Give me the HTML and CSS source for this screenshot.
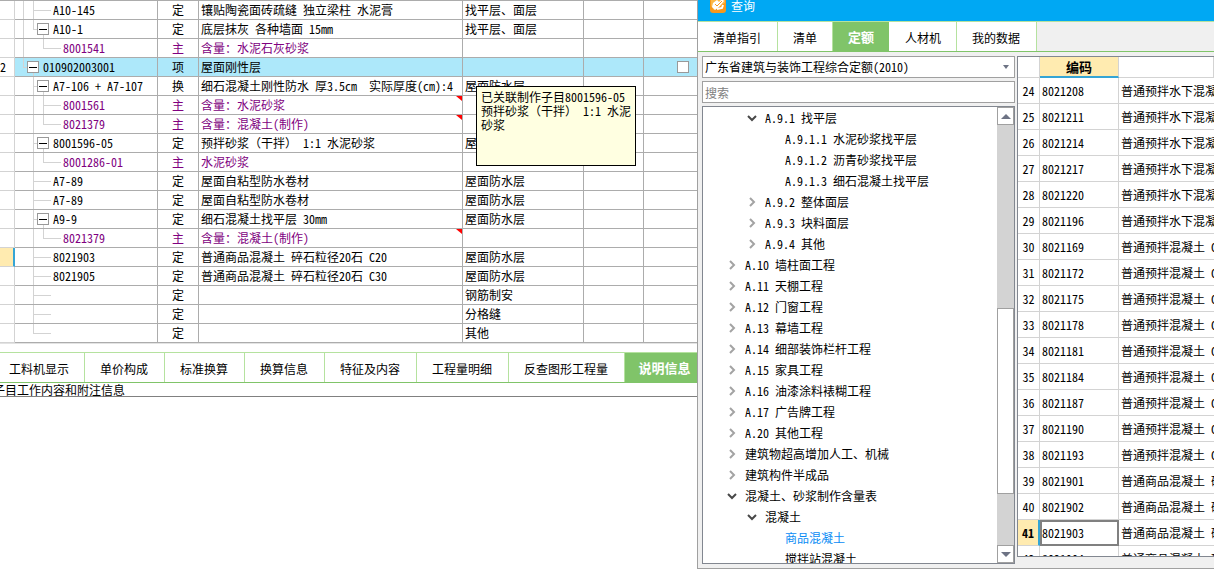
FILE: index.html
```html
<!DOCTYPE html>
<html lang="zh-CN">
<head>
<meta charset="utf-8">
<title>查询</title>
<link rel="stylesheet" href="styles.css">
</head>
<body>
<svg class="defs" aria-hidden="true">
  <symbol id="right" viewBox="0 0 10 10"><path d="M3 1l4 4-4 4" fill="none" stroke="#a3a3a3" stroke-width="2"/></symbol>
  <symbol id="down" viewBox="0 0 10 10"><path d="M1 3l4 4 4-4" fill="none" stroke="#484848" stroke-width="2"/></symbol>
</svg>
<div class="app">
<main class="bill">
  <table class="sheet">
    <colgroup><col class="c-num"><col class="c-code"><col class="c-type"><col class="c-name"><col class="c-part"><col class="c-a"><col></colgroup>
    <tbody>
    <tr><th></th><td><div class="node"><i class="v"></i><i class="t"></i><i class="h"></i>A10-145</div></td><td>定</td><td>镶贴陶瓷面砖疏缝 独立梁柱 水泥膏</td><td>找平层、面层</td><td></td><td></td></tr>
    <tr><th></th><td><div class="node"><i class="v"></i><i class="l s"></i><button class="box" aria-label="折叠"></button>A10-1</div></td><td>定</td><td>底层抹灰 各种墙面 15mm</td><td>找平层、面层</td><td></td><td></td></tr>
    <tr class="main"><th></th><td><div class="node"><i class="v"></i><i></i><i class="l"></i><i class="h"></i>8001541</div></td><td>主</td><td>含量：水泥石灰砂浆</td><td></td><td></td><td></td></tr>
    <tr class="item"><th>2</th><td><div class="node"><i class="l s"></i><button class="box" aria-label="折叠"></button>010902003001</div></td><td>项</td><td>屋面刚性层</td><td></td><td></td><td class="check"><input type="checkbox" aria-label="选择"></td></tr>
    <tr><th></th><td><div class="node"><i></i><i class="t s"></i><button class="box" aria-label="折叠"></button>A7-106 + A7-107</div></td><td>换</td><td>细石混凝土刚性防水 厚3.5cm  实际厚度(cm):4</td><td>屋面防水层</td><td></td><td></td></tr>
    <tr class="main"><th></th><td><div class="node"><i></i><i class="v"></i><i class="t"></i><i class="h"></i>8001561</div></td><td>主</td><td class="note">含量：水泥砂浆</td><td></td><td></td><td></td></tr>
    <tr class="main"><th></th><td><div class="node"><i></i><i class="v"></i><i class="l"></i><i class="h"></i>8021379</div></td><td>主</td><td class="note">含量：混凝土(制作)</td><td></td><td></td><td></td></tr>
    <tr><th></th><td><div class="node"><i></i><i class="t s"></i><button class="box" aria-label="折叠"></button>8001596-05</div></td><td>定</td><td>预拌砂浆（干拌） 1:1 水泥砂浆</td><td>屋面防水层</td><td></td><td></td></tr>
    <tr class="main"><th></th><td><div class="node"><i></i><i class="v"></i><i class="l"></i><i class="h"></i>8001286-01</div></td><td>主</td><td>水泥砂浆</td><td></td><td></td><td></td></tr>
    <tr><th></th><td><div class="node"><i></i><i class="t"></i><i class="h"></i>A7-89</div></td><td>定</td><td>屋面自粘型防水卷材</td><td>屋面防水层</td><td></td><td></td></tr>
    <tr><th></th><td><div class="node"><i></i><i class="t"></i><i class="h"></i>A7-89</div></td><td>定</td><td>屋面自粘型防水卷材</td><td>屋面防水层</td><td></td><td></td></tr>
    <tr><th></th><td><div class="node"><i></i><i class="t s"></i><button class="box" aria-label="折叠"></button>A9-9</div></td><td>定</td><td>细石混凝土找平层 30mm</td><td>屋面防水层</td><td></td><td></td></tr>
    <tr class="main"><th></th><td><div class="node"><i></i><i class="v"></i><i class="l"></i><i class="h"></i>8021379</div></td><td>主</td><td class="note">含量：混凝土(制作)</td><td></td><td></td><td></td></tr>
    <tr class="current"><th></th><td><div class="node"><i></i><i class="t"></i><i class="h"></i>8021903</div></td><td>定</td><td>普通商品混凝土 碎石粒径20石 C20</td><td>屋面防水层</td><td></td><td></td></tr>
    <tr><th></th><td><div class="node"><i></i><i class="t"></i><i class="h"></i>8021905</div></td><td>定</td><td>普通商品混凝土 碎石粒径20石 C30</td><td>屋面防水层</td><td></td><td></td></tr>
    <tr><th></th><td><div class="node"><i></i><i class="t"></i><i class="h"></i></div></td><td>定</td><td></td><td>钢筋制安</td><td></td><td></td></tr>
    <tr><th></th><td><div class="node"><i></i><i class="t"></i><i class="h"></i></div></td><td>定</td><td></td><td>分格缝</td><td></td><td></td></tr>
    <tr><th></th><td><div class="node"><i></i><i class="l"></i><i class="h"></i></div></td><td>定</td><td></td><td>其他</td><td></td><td></td></tr>
    </tbody>
  </table>
  <nav class="tabs detail-tabs">
    <button>工料机显示</button><button>单价构成</button><button>标准换算</button><button>换算信息</button><button>特征及内容</button><button>工程量明细</button><button>反查图形工程量</button><button class="on">说明信息</button>
  </nav>
  <p class="info">子目工作内容和附注信息</p>
  <div class="tip" role="tooltip">已关联制作子目8001596-05 预拌砂浆（干拌） 1:1 水泥砂浆</div>
</main>

<section class="query">
  <header class="title">
    <svg class="logo" viewBox="0 0 16 16"><rect width="16" height="16" rx="3" fill="#f7981c"/><path d="M1 3l6-2 8 2v3L4 13 1 9z" fill="#fbb847"/><path d="M3 6l4-3 2 2 3-3 2 2-5 6-4 3-3-3z" fill="#fff"/><path d="M5 7l2 2 5-5M6 13l6-2 2-4" fill="none" stroke="#f7981c"/><path d="M7 12l5-1 1-3" fill="none" stroke="#fff" stroke-width="2"/></svg>
    <span>查询</span>
  </header>
  <nav class="tabs query-tabs">
    <button>清单指引</button><button>清单</button><button class="on">定额</button><button>人材机</button><button>我的数据</button>
  </nav>
  <div class="panes">
    <div class="finder">
      <div class="combo">
        <select aria-label="定额库"><option>广东省建筑与装饰工程综合定额(2010)</option></select>
        <svg viewBox="0 0 6 4"><path d="M0 0h6L3 4z" fill="#6d7384"/></svg>
      </div>
      <input class="search" type="text" placeholder="搜索" aria-label="搜索">
      <div class="tree">
        <ul>
          <li class="d2"><svg><use href="#down"/></svg>A.9.1 找平层</li>
          <li class="d3">A.9.1.1 水泥砂浆找平层</li>
          <li class="d3">A.9.1.2 沥青砂浆找平层</li>
          <li class="d3">A.9.1.3 细石混凝土找平层</li>
          <li class="d2"><svg><use href="#right"/></svg>A.9.2 整体面层</li>
          <li class="d2"><svg><use href="#right"/></svg>A.9.3 块料面层</li>
          <li class="d2"><svg><use href="#right"/></svg>A.9.4 其他</li>
          <li><svg><use href="#right"/></svg>A.10 墙柱面工程</li>
          <li><svg><use href="#right"/></svg>A.11 天棚工程</li>
          <li><svg><use href="#right"/></svg>A.12 门窗工程</li>
          <li><svg><use href="#right"/></svg>A.13 幕墙工程</li>
          <li><svg><use href="#right"/></svg>A.14 细部装饰栏杆工程</li>
          <li><svg><use href="#right"/></svg>A.15 家具工程</li>
          <li><svg><use href="#right"/></svg>A.16 油漆涂料裱糊工程</li>
          <li><svg><use href="#right"/></svg>A.17 广告牌工程</li>
          <li><svg><use href="#right"/></svg>A.20 其他工程</li>
          <li><svg><use href="#right"/></svg>建筑物超高增加人工、机械</li>
          <li><svg><use href="#right"/></svg>建筑构件半成品</li>
          <li><svg><use href="#down"/></svg>混凝土、砂浆制作含量表</li>
          <li class="d2"><svg><use href="#down"/></svg>混凝土</li>
          <li class="d3 picked">商品混凝土</li>
          <li class="d3">搅拌站混凝土</li>
        </ul>
        <div class="scroll">
          <button aria-label="向上"><svg viewBox="0 0 10 5"><path d="M0 5h10L5 0z" fill="#6d7384"/></svg></button>
          <div class="track"><div class="thumb"></div></div>
          <button aria-label="向下"><svg viewBox="0 0 10 5"><path d="M0 0h10L5 5z" fill="#6d7384"/></svg></button>
        </div>
      </div>
    </div>
    <div class="results">
      <table>
        <colgroup><col class="r-num"><col class="r-code"><col></colgroup>
        <thead><tr><th></th><th class="sorted">编码</th><th></th></tr></thead>
        <tbody>
        <tr><th>24</th><td>8021208</td><td>普通预拌水下混凝土 C20</td></tr>
        <tr><th>25</th><td>8021211</td><td>普通预拌水下混凝土 C25</td></tr>
        <tr><th>26</th><td>8021214</td><td>普通预拌水下混凝土 C30</td></tr>
        <tr><th>27</th><td>8021217</td><td>普通预拌水下混凝土 C35</td></tr>
        <tr><th>28</th><td>8021220</td><td>普通预拌水下混凝土 C40</td></tr>
        <tr><th>29</th><td>8021196</td><td>普通预拌水下混凝土 C45</td></tr>
        <tr><th>30</th><td>8021169</td><td>普通预拌混凝土 C10</td></tr>
        <tr><th>31</th><td>8021172</td><td>普通预拌混凝土 C15</td></tr>
        <tr><th>32</th><td>8021175</td><td>普通预拌混凝土 C20</td></tr>
        <tr><th>33</th><td>8021178</td><td>普通预拌混凝土 C25</td></tr>
        <tr><th>34</th><td>8021181</td><td>普通预拌混凝土 C30</td></tr>
        <tr><th>35</th><td>8021184</td><td>普通预拌混凝土 C35</td></tr>
        <tr><th>36</th><td>8021187</td><td>普通预拌混凝土 C40</td></tr>
        <tr><th>37</th><td>8021190</td><td>普通预拌混凝土 C45</td></tr>
        <tr><th>38</th><td>8021193</td><td>普通预拌混凝土 C50</td></tr>
        <tr><th>39</th><td>8021901</td><td>普通商品混凝土 碎石</td></tr>
        <tr><th>40</th><td>8021902</td><td>普通商品混凝土 碎石</td></tr>
        <tr class="active"><th>41</th><td>8021903</td><td>普通商品混凝土 碎石</td></tr>
        <tr><th>42</th><td>8021904</td><td>普通商品混凝土 碎石</td></tr>
        </tbody>
      </table>
    </div>
  </div>
</section>
</div>
</body>
</html>
```

FILE: styles.css
```css
* { box-sizing: border-box; }

body {
  margin: 0;
  background: #fff;
  overflow: hidden;
}

body, button, input, select {
  color: #000;
  font-family: "Noto Sans Mono CJK SC", "Noto Sans CJK SC", sans-serif;
  font-size: 12px;
  line-height: 18px;
}

button { margin: 0; padding: 0; }

.defs { display: none; }

.app {
  display: flex;
  height: 100vh;
  padding-bottom: 8px;
}

/* Bill of quantities */
.bill {
  position: relative;
  flex: 1;
  min-width: 0;
  overflow: hidden;
}

.sheet {
  width: 100%;
  table-layout: fixed;
  border-collapse: separate;
  border-spacing: 0;
  border-top: 1px solid #acacac;
  border-bottom: 1px solid #e3e3e3;
}

.c-num { width: 15px; }
.c-code { width: 143px; }
.c-type { width: 41px; }
.c-name { width: 264px; }
.c-part { width: 121px; }
.c-a { width: 60px; }

.sheet th, .sheet td {
  height: 19px;
  padding: 0 0 0 2px;
  border-right: 1px solid #acacac;
  border-bottom: 1px solid #acacac;
  white-space: pre;
  overflow: hidden;
}

.sheet td:last-child { border-right: 0; }

.sheet th {
  padding: 0;
  border-color: #d3d3d3;
  font-weight: normal;
  text-align: left;
}

.sheet td:nth-child(2) { padding: 0 0 0 8px; }
.sheet td:nth-child(3) { padding: 0; text-align: center; }
.sheet .main td { color: #800080; }
.sheet .item td { background: #ade8fa; }
.sheet .current th { background: #ffebb0; border-right: 2px solid #35a5d5; }

.node { display: flex; height: 18px; }

.node i {
  width: 10px;
  background-repeat: no-repeat;
}

.node .s { width: 4px; }
.node .v { border-left: 1px solid #d3d3d3; }

.node .t {
  border-left: 1px solid #d3d3d3;
  background-image: linear-gradient(#d3d3d3, #d3d3d3);
  background-size: 100% 1px;
  background-position: 0 9px;
}

.node .l {
  background-image: linear-gradient(#d3d3d3, #d3d3d3), linear-gradient(#d3d3d3, #d3d3d3);
  background-size: 1px 10px, 100% 1px;
  background-position: 0 0, 0 9px;
}

.node .h {
  background-image: linear-gradient(#d3d3d3, #d3d3d3);
  background-size: 8px 1px;
  background-position: 0 9px;
}

.box {
  width: 12px;
  height: 18px;
  margin-right: 4px;
  border: 0;
  background:
    linear-gradient(#000, #000) 2px 9px / 8px 1px no-repeat,
    linear-gradient(#fff, #fff) 1px 4px / 10px 10px no-repeat,
    linear-gradient(#999, #999) 0 3px / 12px 12px no-repeat,
    linear-gradient(#d3d3d3, #d3d3d3) 6px 15px / 1px 3px no-repeat;
}

.sheet .note { position: relative; }

.note::after {
  content: "";
  position: absolute;
  top: 0;
  right: 0;
  width: 6px;
  height: 5px;
  background: #f00;
  clip-path: polygon(0 0, 100% 0, 100% 100%);
}

.sheet .check { padding-right: 8px; text-align: right; line-height: 0; }

.check input {
  appearance: none;
  width: 12px;
  height: 12px;
  margin: 0;
  border: 1px solid #999;
  background: #fff;
}

.tabs { display: flex; }

.tabs button {
  border: 0;
  border-right: 1px solid #b5e29f;
  background: #fff;
  white-space: nowrap;
}

.tabs .on {
  border: 0;
  background: #80c469;
  color: #fff;
  font-size: 13px;
  font-weight: bold;
}

.detail-tabs {
  height: 31px;
  margin-top: 8px;
  border-top: 1px solid #b5e29f;
  border-bottom: 1px solid #80c469;
}

.detail-tabs button { padding: 3px 16px 0 15px; }
.detail-tabs button:first-child { padding: 3px 15px 0 9px; }
.detail-tabs .on { flex: 1; padding: 0 0 0 7px; }

.info {
  height: 14px;
  margin: 0;
  border-bottom: 1px solid #808080;
  line-height: 14px;
  text-indent: -7px;
}

.tip {
  position: absolute;
  left: 476px;
  top: 86px;
  width: 160px;
  height: 80px;
  padding: 3px 3px 0 4px;
  border: 1px solid #000;
  background: #ffffe1;
  line-height: 14px;
}

/* Query window */
.query {
  display: flex;
  flex-direction: column;
  width: 517px;
  border-left: 1px solid #a0a0a0;
  border-bottom: 1px solid #a0a0a0;
  background: #f0f0f0;
}

.title {
  display: flex;
  align-items: flex-start;
  gap: 5px;
  height: 21px;
  padding-left: 12px;
  background: #00a8f3;
  color: #fff;
  line-height: 12px;
  overflow: hidden;
}

.logo { width: 16px; height: 16px; margin-top: -3px; }

.query-tabs {
  height: 31px;
  border-top: 1px solid #b5e29f;
  border-bottom: 1px solid #80c469;
}

.query-tabs button { padding: 3px 16px 0 15px; }
.query-tabs button:nth-child(2) { padding: 3px 15px 0; }
.query-tabs button:nth-child(4) { padding: 3px 15px 0 16px; }
.query-tabs .on { padding: 0 15px; }

.panes {
  display: flex;
  flex: 1;
  min-height: 0;
  gap: 2px;
  padding: 4px 0 4px 4px;
}

.finder {
  display: flex;
  flex-direction: column;
  gap: 3px;
  width: 313px;
}

.combo, .search {
  flex: none;
  width: 100%;
  height: 22px;
  border: 1px solid #a0a0a0;
  background: #fff;
}

.combo { display: flex; align-items: center; padding-right: 5px; }

.combo select {
  appearance: none;
  flex: 1;
  height: 20px;
  padding: 0 0 0 2px;
  border: 0;
  background: transparent;
}

.combo svg { width: 6px; height: 4px; }

.search { padding: 0 2px; }
.search::placeholder { color: #808080; }

.tree {
  display: flex;
  flex: 1;
  min-height: 0;
  border: 1px solid #828790;
  background: #fff;
  overflow: hidden;
}

.tree ul {
  flex: 1;
  margin: 0;
  padding: 0 0 0 24px;
  list-style: none;
}

.tree li {
  display: flex;
  align-items: center;
  height: 21px;
  white-space: pre;
}

.tree li svg { width: 10px; height: 10px; margin-right: 8px; }
.tree .d2 { padding-left: 20px; }
.tree .d3 { padding-left: 58px; }
.tree .picked { color: #0a8cf5; }

.scroll {
  display: flex;
  flex-direction: column;
  width: 17px;
  background: #d3d3d3;
}

.scroll button {
  display: flex;
  align-items: center;
  justify-content: center;
  height: 18px;
  border: 1px solid #a0a0a0;
  background: #fff;
}

.scroll svg { width: 10px; height: 5px; }

.track { flex: 1; padding-top: 183px; }

.thumb {
  height: 186px;
  border: 1px solid #a0a0a0;
  background: #fff;
}

.results {
  flex: 1;
  min-width: 0;
  margin-bottom: 7px;
  border: 1px solid #828790;
  border-right: 0;
  background: #fff;
  overflow: hidden;
}

.results table {
  width: 100%;
  table-layout: fixed;
  border-collapse: separate;
  border-spacing: 0;
}

.r-num { width: 22px; }
.r-code { width: 79px; }

.results th, .results td {
  height: 26px;
  padding: 0 0 0 2px;
  border-right: 1px solid #d3d3d3;
  border-bottom: 1px solid #d3d3d3;
  white-space: nowrap;
  overflow: hidden;
}

.results td:last-child { border-right: 0; }
.results th { padding: 0; font-weight: normal; text-align: center; }
.results thead th { height: 21px; }

.results thead .sorted {
  border-bottom: 2px solid #35a5d5;
  background: #ffebb0;
  font-size: 13px;
  font-weight: bold;
}

.results .active th {
  border-right: 2px solid #35a5d5;
  background: #ffebb0;
  font-weight: bold;
}

.results .active td:nth-child(2) { outline: 2px solid #808080; outline-offset: -2px; }
```
